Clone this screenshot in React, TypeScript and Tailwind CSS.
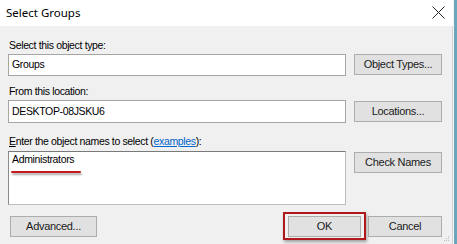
import React from "react";

const font = { fontFamily: '"Liberation Sans", Arial, sans-serif' };

function Btn({ children, className = "" }: { children: React.ReactNode; className?: string }) {
  return (
    <div
      className={`flex items-center justify-center bg-[#e1e1e1] border border-[#adadad] text-[11px] tracking-[-0.3px] text-[#1a1a1a] ${className}`}
    >
      {children}
    </div>
  );
}

export default function App() {
  return (
    <div className="w-[457px] h-[244px] flex bg-[#f0f0f0] overflow-hidden" style={font}>
      <div className="w-[453px] h-full flex flex-col">
        {/* Title bar */}
        <div className="h-[26px] bg-white flex items-center justify-between pl-[6px] pr-[8px]">
          <span
            className="text-[11.5px] text-black leading-none mb-[1px]"
            style={{ fontFamily: '"Noto Sans", "Open Sans", sans-serif' }}
          >
            Select Groups
          </span>
          <svg width="13" height="13" viewBox="0 0 13 13" className="mb-[1px]">
            <path d="M0.5 0.5 L12.5 12.5 M12.5 0.5 L0.5 12.5" stroke="#222" strokeWidth="1" />
          </svg>
        </div>
        {/* Body */}
        <div className="flex-1 flex flex-col pl-[8px] border-r border-[#d4d4d4] relative text-[10.5px] tracking-[-0.35px]">
          <div className="leading-[13px] text-black mt-[13px] pl-[1px]">Select this object type:</div>
          <div className="flex items-start gap-[8px] mt-[2px]">
            <div className="w-[338px] h-[22px] bg-white border border-[#a5a5a5] flex items-center pl-[3px] text-black">
              Groups
            </div>
            <Btn className="w-[88px] h-[21px]">Object Types...</Btn>
          </div>
          <div className="leading-[13px] text-black mt-[9px] pl-[1px]">From this location:</div>
          <div className="flex items-start gap-[8px] mt-[2px]">
            <div className="w-[338px] h-[23px] bg-white border border-[#a5a5a5] flex items-center pl-[3px] text-black">
              DESKTOP-08JSKU6
            </div>
            <Btn className="w-[88px] h-[21px] mt-[1px]">Locations...</Btn>
          </div>
          <div className="leading-[13px] text-black mt-[12px] pl-[1px]">
            <span className="underline">E</span>nter the object names to select (
            <span className="text-[#0066cc] underline">examples</span>):
          </div>
          <div className="flex items-start gap-[8px] mt-[3px]">
            <div className="relative w-[338px] h-[54px] bg-white border border-[#bdbdbd] border-t-[#7a7a7a] border-l-[#8a8a8a] pl-[3px] pt-[1px] leading-[13px] text-black">
              Administrators
              <div className="absolute left-[2px] top-[19px] w-[70px] h-[2px] bg-[#c8191e] shadow-[1px_2px_2px_rgba(0,0,0,0.35)] rounded-full" />
            </div>
            <Btn className="w-[88px] h-[21px] mt-[1px]">Check Names</Btn>
          </div>
          <div className="flex items-start mt-[7px]">
            <Btn className="w-[87px] h-[21px] ml-[2px] mt-[4px]">Advanced...</Btn>
            <div className="ml-[186px] border-2 border-[#b0191c] pt-[2px] pb-[1px] px-[3px] shadow-[1px_2px_3px_rgba(0,0,0,0.35)]">
              <Btn className="w-[73px] h-[21px]">OK</Btn>
            </div>
            <Btn className="w-[74px] h-[21px] ml-[2px] mt-[4px]">Cancel</Btn>
          </div>
          <svg width="6" height="6" viewBox="0 0 6 6" className="absolute right-[2px] bottom-[2px]">
            <rect x="4" y="0" width="1" height="1" fill="#bcbcbc" />
            <rect x="2" y="2" width="1" height="1" fill="#bcbcbc" />
            <rect x="4" y="2" width="1" height="1" fill="#bcbcbc" />
            <rect x="0" y="4" width="1" height="1" fill="#bcbcbc" />
            <rect x="2" y="4" width="1" height="1" fill="#bcbcbc" />
            <rect x="4" y="4" width="1" height="1" fill="#bcbcbc" />
          </svg>
        </div>
      </div>
      <div className="w-[1px] h-full bg-[#f6f6f6]" />
      <div className="w-[3px] h-full bg-[#6aa7bd]" />
    </div>
  );
}
